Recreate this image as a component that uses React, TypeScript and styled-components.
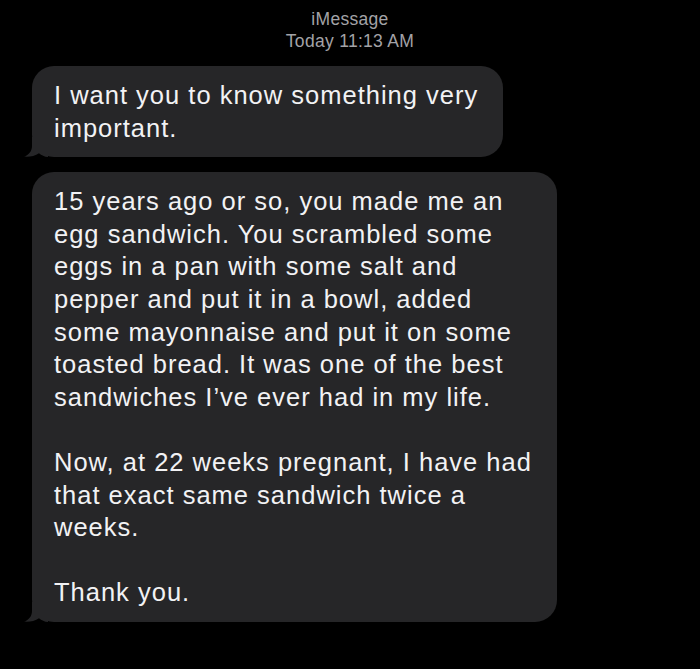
import styled, { createGlobalStyle } from "styled-components";

const GlobalStyle = createGlobalStyle`
  html, body {
    margin: 0;
    padding: 0;
    background: #000;
  }
  body {
    font-family: "Liberation Sans", Arial, sans-serif;
  }
`;

const Screen = styled.main`
  width: 700px;
  height: 669px;
  background: #000;
  display: flex;
  flex-direction: column;
  overflow: hidden;
`;

const Header = styled.header`
  display: flex;
  flex-direction: column;
  align-items: center;
  padding-top: 8px;
  color: #a3a3a7;
  font-size: 17.5px;
  line-height: 22px;
  letter-spacing: 0.3px;
`;

const Thread = styled.section`
  display: flex;
  flex-direction: column;
  align-items: flex-start;
  gap: 15px;
  padding: 14px 0 0 32px;
`;

const Bubble = styled.div`
  position: relative;
  background: #262628;
  color: #f2f2f4;
  border-radius: 22px;
  padding: 13px 25px 13px 22px;
  font-size: 25.5px;
  line-height: 32.6px;
  letter-spacing: 1px;
`;

const Line = styled.span`
  display: block;
  white-space: nowrap;
  min-height: 32.6px;
`;

const Tail = styled.svg`
  position: absolute;
  left: -8px;
  bottom: 0;
  width: 24px;
  height: 20px;
`;

const BubbleTail = () => (
  <Tail viewBox="0 0 24 20">
    <path
      d="M8 0 L8 9 C8 14 5 18 0 19.6 C5 20.2 11 19 15 16.2 C17.5 18.4 20.5 19.7 24 20 L24 0 Z"
      fill="#262628"
    />
  </Tail>
);

const messages: string[][] = [
  ["I want you to know something very", "important."],
  [
    "15 years ago or so, you made me an",
    "egg sandwich. You scrambled some",
    "eggs in a pan with some salt and",
    "pepper and put it in a bowl, added",
    "some mayonnaise and put it on some",
    "toasted bread. It was one of the best",
    "sandwiches I’ve ever had in my life.",
    "",
    "Now, at 22 weeks pregnant, I have had",
    "that exact same sandwich twice a",
    "weeks.",
    "",
    "Thank you.",
  ],
];

const App = () => {
  return (
    <Screen>
      <GlobalStyle />
      <Header>
        <span>iMessage</span>
        <span>Today 11:13 AM</span>
      </Header>
      <Thread>
        {messages.map((lines, i) => (
          <Bubble key={i}>
            {lines.map((text, j) => (
              <Line key={j}>{text}</Line>
            ))}
            <BubbleTail />
          </Bubble>
        ))}
      </Thread>
    </Screen>
  );
};

export default App;
